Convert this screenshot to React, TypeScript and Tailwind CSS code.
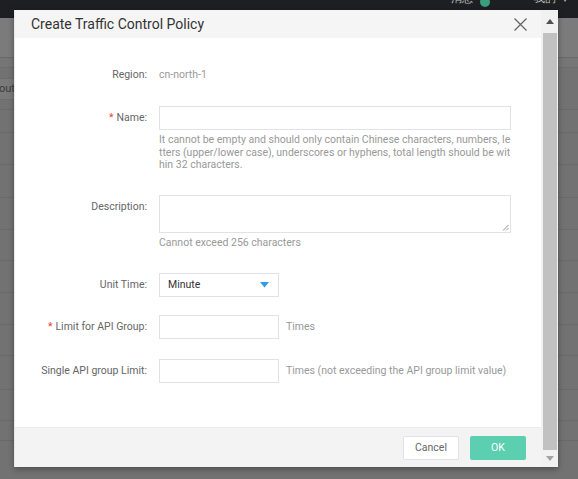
import React from 'react';

const rowHeights = [42, 23, 32, 33, 32, 31, 32, 32, 31, 34, 31, 20];

const Label = ({ text, required }: { text: string; required?: boolean }) => (
  <div className="w-[144px] shrink-0 pr-[12px] text-right text-[#666] leading-[24px]">
    {required && <span className="text-[#f04134] mr-[3px]">*</span>}
    {text}
  </div>
);

const App = () => {
  return (
    <div className="relative w-[578px] h-[479px] overflow-hidden bg-[#727272] font-['Roboto',sans-serif] text-[10.5px]">
      {/* page behind the mask */}
      <div className="h-[18px] bg-[#1d1f23] flex items-start justify-end pr-[11px] text-[#bdbdbd] text-[11px] overflow-hidden">
        <span className="-mt-[7px] mr-[7px] leading-[12px]">消息</span>
        <span className="-mt-[3px] w-[10px] h-[10px] rounded-full bg-[#3a9e7d] mr-[44px]"></span>
        <span className="-mt-[7px] leading-[12px]">我的</span>
        <span className="-mt-[5px] ml-[7px] text-[8px] leading-[10px]">▾</span>
      </div>
      <div className="h-[40px] bg-[#7b7b7b] border-b border-[#6a6a6a]"></div>
      <div className="h-[10px] bg-[#767676] border-b border-[#6c6c6c]"></div>
      <div className="flex flex-col">
        {rowHeights.map((h, i) => (
          <div
            key={i}
            className="border-b border-[#6a6a6a] flex items-center"
            style={{ height: h }}
          >
            {i === 0 && (
              <div className="ml-[-6px] h-[22px] px-[4px] bg-[#7a7a7a] border border-[#6d6d6d] text-[#3a3a3a] leading-[20px] text-[11px]">
                outh
              </div>
            )}
          </div>
        ))}
      </div>

      {/* modal */}
      <div className="absolute left-[14px] top-[10px] w-[544px] h-[457px] bg-white flex shadow-[0_2px_6px_rgba(0,0,0,0.35)] border-l border-[#e6e6e6]">
        <div className="flex-1 flex flex-col">
          <div className="h-[28px] bg-[#f5f5f5] flex items-center justify-between pl-[16px] pr-[14px]">
            <span className="text-[14px] text-[#333] leading-[18px]">Create Traffic Control Policy</span>
            <svg width="13" height="13" viewBox="0 0 13 13" className="mt-[1px]">
              <path d="M0.5 0.5L12.5 12.5M12.5 0.5L0.5 12.5" stroke="#666" strokeWidth="1.3" fill="none" />
            </svg>
          </div>

          <div className="flex-1 flex flex-col pt-[25px]">
            <div className="flex">
              <Label text="Region:" />
              <div className="leading-[24px] text-[#999]">cn-north-1</div>
            </div>

            <div className="flex mt-[19px]">
              <Label text="Name:" required />
              <div className="w-[352px]">
                <div className="h-[24px] border border-[#dfe3e8] bg-white"></div>
                <div className="mt-[4px] text-[#999] leading-[12.5px] break-all text-[10.5px]">
                  It cannot be empty and should only contain Chinese characters, numbers, letters (upper/lower case), underscores or hyphens, total length should be within 32 characters.
                </div>
              </div>
            </div>

            <div className="flex mt-[23px]">
              <Label text="Description:" />
              <div className="w-[352px]">
                <div className="relative h-[38px] border border-[#dfe3e8] bg-white">
                  <svg width="7" height="7" viewBox="0 0 7 7" className="absolute right-[1px] bottom-[1px]">
                    <path d="M6.5 1L1 6.5M6.5 4L4 6.5" stroke="#777" strokeWidth="0.8" />
                  </svg>
                </div>
                <div className="mt-[4px] text-[#999] leading-[12.5px] text-[10.5px]">Cannot exceed 256 characters</div>
              </div>
            </div>

            <div className="flex mt-[24px]">
              <Label text="Unit Time:" />
              <div className="w-[120px] h-[24px] border border-[#dfe3e8] flex items-center justify-between pl-[8px] pr-[9px]">
                <span className="text-[#333]">Minute</span>
                <svg width="9" height="6" viewBox="0 0 9 6">
                  <path d="M0 0H9L4.5 5.5Z" fill="#2d9cf0" />
                </svg>
              </div>
            </div>

            <div className="flex mt-[18px] items-center">
              <Label text="Limit for API Group:" required />
              <div className="w-[120px] h-[24px] border border-[#dfe3e8]"></div>
              <span className="ml-[7px] text-[#999]">Times</span>
            </div>

            <div className="flex mt-[20px] items-center">
              <Label text="Single API group Limit:" />
              <div className="w-[120px] h-[24px] border border-[#dfe3e8]"></div>
              <span className="ml-[7px] text-[#999]">Times (not exceeding the API group limit value)</span>
            </div>
          </div>

          <div className="h-[40px] bg-[#f3f3f3] border-t border-[#ebebeb] flex items-center justify-end pr-[15px] gap-[11px]">
            <button className="w-[56px] h-[24px] bg-white border border-[#dfe3e8] rounded-[2px] text-[#666] text-[10.5px]">
              Cancel
            </button>
            <button className="w-[56px] h-[24px] bg-[#5ccfb0] rounded-[2px] text-white text-[10.5px]">
              OK
            </button>
          </div>
        </div>

        {/* scrollbar */}
        <div className="w-[17px] bg-[#f1f1f1] flex flex-col items-center">
          <div className="h-[23px] flex items-center justify-center">
            <svg width="8" height="5" viewBox="0 0 8 5">
              <path d="M4 0L8 5H0Z" fill="#505050" />
            </svg>
          </div>
          <div className="w-[14px] h-[417px] bg-[#c1c1c1]"></div>
          <div className="flex-1 flex items-center justify-center">
            <svg width="8" height="5" viewBox="0 0 8 5">
              <path d="M0 0H8L4 5Z" fill="#a3a3a3" />
            </svg>
          </div>
        </div>
      </div>
    </div>
  );
};

export default App;
